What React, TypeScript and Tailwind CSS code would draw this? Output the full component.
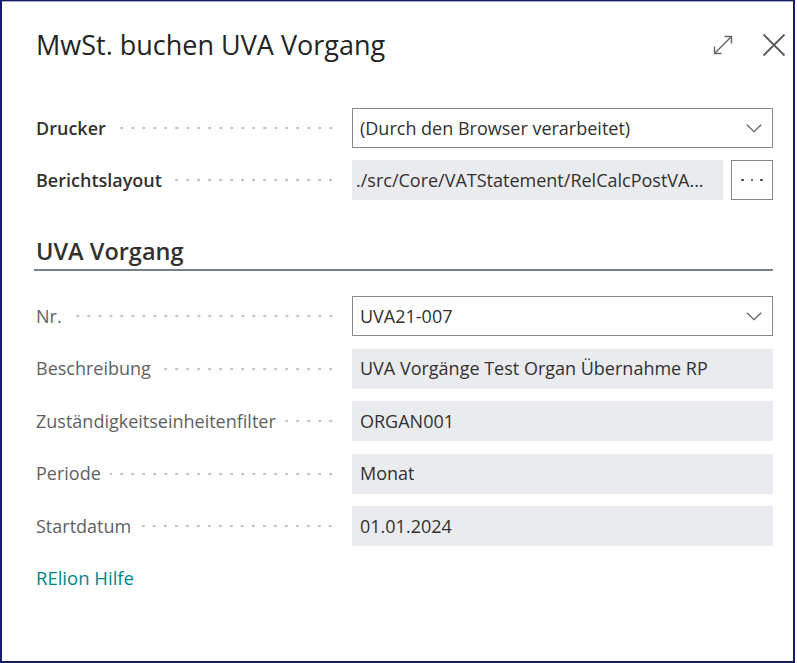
import React from "react";

const Dots = () => (
  <span className="flex-1 ml-[9px] h-[4px] bg-[radial-gradient(circle,#c2c4c8_1.1px,transparent_1.6px)] bg-[length:11px_4px] bg-repeat-x bg-right" />
);

const Chevron = () => (
  <svg width="16" height="9" viewBox="0 0 16 9" fill="none" className="shrink-0">
    <path d="M0.8 0.8 L8 7.6 L15.2 0.8" stroke="#605e5c" strokeWidth="1.2" />
  </svg>
);

function Label({ text, strong }: { text: string; strong?: boolean }) {
  return (
    <div className="w-[300px] flex items-center shrink-0">
      <span
        className={
          strong
            ? "font-semibold text-[#323130] whitespace-nowrap"
            : "font-normal text-[#616161] whitespace-nowrap"
        }
      >
        {text}
      </span>
      <Dots />
    </div>
  );
}

function SelectField({ value }: { value: string }) {
  return (
    <div className="flex-1 h-[40px] border border-[#8a8886] flex items-center pl-[7px] pr-[10px] text-[#323130]">
      <span className="flex-1 whitespace-nowrap overflow-hidden">{value}</span>
      <Chevron />
    </div>
  );
}

function ReadField({ value }: { value: string }) {
  return (
    <div className="flex-1 h-[40px] bg-[#eaebee] flex items-center px-[8px] text-[#323130]">
      <span className="whitespace-nowrap overflow-hidden">{value}</span>
    </div>
  );
}

export default function App() {
  return (
    <div className="w-[797px] h-[663px] bg-white font-['Open_Sans',sans-serif] text-[18px]">
      <div className="w-[795px] h-[663px] border-l-2 border-r-2 border-b-2 border-t border-[#141c6b] flex flex-col">
        <div className="flex-1 border-t border-[#aab0c0] pl-[34px] pr-[20px] pt-[26px]">
          {/* Header */}
          <div className="flex items-center mr-[-14px]">
            <h1 className="text-[27px] leading-[34px] font-medium text-[#242424]">
              MwSt. buchen UVA Vorgang
            </h1>
            <div className="ml-auto flex items-center gap-[28px] pr-[1px]">
              <svg width="22" height="22" viewBox="0 0 22 22" fill="none">
                <path d="M2.5 19.5 L19.5 2.5" stroke="#666" strokeWidth="1.4" />
                <path d="M12.5 2.5 H19.5 V9.5" stroke="#666" strokeWidth="1.4" />
                <path d="M2.5 12.5 V19.5 H9.5" stroke="#666" strokeWidth="1.4" />
              </svg>
              <svg width="24" height="24" viewBox="0 0 24 24" fill="none">
                <path d="M1.5 1.5 L22.5 22.5 M22.5 1.5 L1.5 22.5" stroke="#5a5a5a" strokeWidth="1.8" />
              </svg>
            </div>
          </div>

          {/* Options */}
          <div className="mt-[46px] flex flex-col gap-[12px]">
            <div className="flex items-center gap-[16px]">
              <Label text="Drucker" strong />
              <SelectField value="(Durch den Browser verarbeitet)" />
            </div>
            <div className="flex items-center gap-[16px]">
              <Label text="Berichtslayout" strong />
              <div className="flex-1 flex items-center gap-[8px]">
                <div className="flex-1 h-[40px] bg-[#eaebee] flex items-center pl-[4px] pr-[6px] text-[#323130] overflow-hidden">
                  <span className="whitespace-nowrap">./src/Core/VATStatement/RelCalcPostVA...</span>
                </div>
                <button className="w-[42px] h-[40px] border border-[#8a8886] bg-white flex items-center justify-center gap-[7px]">
                  <span className="w-[2.5px] h-[2.5px] rounded-full bg-[#3b3a39]" />
                  <span className="w-[2.5px] h-[2.5px] rounded-full bg-[#3b3a39]" />
                  <span className="w-[2.5px] h-[2.5px] rounded-full bg-[#3b3a39]" />
                </button>
              </div>
            </div>
          </div>

          {/* Section header */}
          <div className="mt-[37px] ml-[-2px] pl-[2px] pb-[4px] border-b-2 border-[#777e8c]">
            <h2 className="text-[23.5px] leading-[28px] font-semibold text-[#323130]">UVA Vorgang</h2>
          </div>

          {/* Fields */}
          <div className="mt-[25px] flex flex-col gap-[12.5px]">
            <div className="flex items-center gap-[16px]">
              <Label text="Nr." />
              <SelectField value="UVA21-007" />
            </div>
            <div className="flex items-center gap-[16px]">
              <Label text="Beschreibung" />
              <ReadField value="UVA Vorgänge Test Organ Übernahme RP" />
            </div>
            <div className="flex items-center gap-[16px]">
              <Label text="Zuständigkeitseinheitenfilter" />
              <ReadField value="ORGAN001" />
            </div>
            <div className="flex items-center gap-[16px]">
              <Label text="Periode" />
              <ReadField value="Monat" />
            </div>
            <div className="flex items-center gap-[16px]">
              <Label text="Startdatum" />
              <ReadField value="01.01.2024" />
            </div>
          </div>

          <div className="mt-[20px] leading-[24px]">
            <a className="text-[#00848c] text-[18.5px] cursor-pointer">RElion Hilfe</a>
          </div>
        </div>
      </div>
    </div>
  );
}
